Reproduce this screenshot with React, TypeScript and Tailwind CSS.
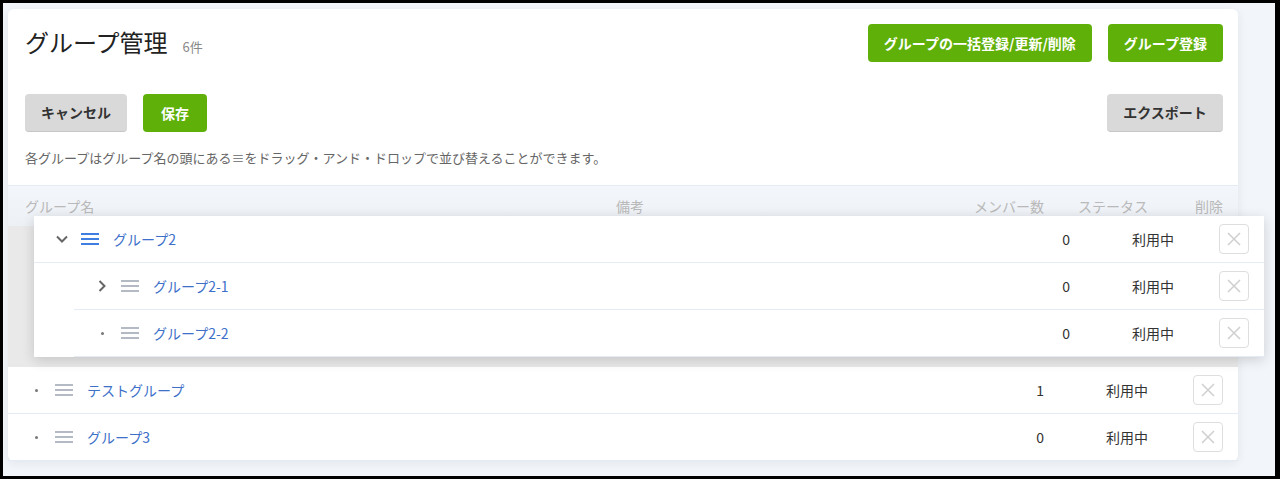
import React from "react";

type Row = {
  name: string;
  count: number;
  status: string;
  lead: "open" | "closed" | "dot";
  active?: boolean;
};

const Hamburger = ({ active }: { active?: boolean }) => (
  <svg width="18" height="12" viewBox="0 0 18 12" className="shrink-0">
    <rect x="0" y="0" width="18" height="2" fill={active ? "#3f7de0" : "#b4bac3"} />
    <rect x="0" y="5" width="18" height="2" fill={active ? "#3f7de0" : "#b4bac3"} />
    <rect x="0" y="10" width="18" height="2" fill={active ? "#3f7de0" : "#b4bac3"} />
  </svg>
);

const Lead = ({ kind }: { kind: Row["lead"] }) => (
  <div className="w-5 h-5 flex items-center justify-center shrink-0">
    {kind === "open" && (
      <svg width="12" height="8" viewBox="0 0 12 8">
        <path d="M1 1.5 L6 6.5 L11 1.5" fill="none" stroke="#666" strokeWidth="2" />
      </svg>
    )}
    {kind === "closed" && (
      <svg width="8" height="12" viewBox="0 0 8 12">
        <path d="M1.5 1 L6.5 6 L1.5 11" fill="none" stroke="#666" strokeWidth="2" />
      </svg>
    )}
    {kind === "dot" && <div className="size-[3px] rounded-full bg-[#777]" />}
  </div>
);

const DeleteBtn = () => (
  <div className="size-[30px] rounded border border-[#dedede] bg-white flex items-center justify-center">
    <svg width="14" height="14" viewBox="0 0 14 14">
      <path d="M1 1 L13 13 M13 1 L1 13" stroke="#cfcfcf" strokeWidth="1.5" />
    </svg>
  </div>
);

const TableRow = ({ row }: { row: Row }) => (
  <div className="flex items-center h-[47px] pl-[18px] pr-[15px] border-b border-[#e4ebf5]">
    <div className="w-[290px] flex items-center shrink-0">
      <Lead kind={row.lead} />
      <div className="ml-[9px]">
        <Hamburger active={row.active} />
      </div>
      <span className="ml-[14px] text-[#3d70c9]">{row.name}</span>
    </div>
    <div className="flex-1" />
    <div className="w-[100px] text-right text-[#333]">{row.count}</div>
    <div className="w-[104px] text-right text-[#333]">{row.status}</div>
    <div className="w-[75px] flex justify-end">
      <DeleteBtn />
    </div>
  </div>
);

export default function App() {
  const parent: Row = { name: "グループ2", count: 0, status: "利用中", lead: "open", active: true };
  const children: Row[] = [
    { name: "グループ2-1", count: 0, status: "利用中", lead: "closed" },
    { name: "グループ2-2", count: 0, status: "利用中", lead: "dot" },
  ];
  const rest: Row[] = [
    { name: "テストグループ", count: 1, status: "利用中", lead: "dot" },
    { name: "グループ3", count: 0, status: "利用中", lead: "dot" },
  ];

  return (
    <div
      className="h-[479px] overflow-hidden bg-[#f2f5f9] border-black border-t-[3px] border-l-[3px] border-r-[5px] border-b-[3px] pt-[6px] pl-[5px]"
      style={{ fontFamily: '"Noto Sans CJK JP", "Noto Sans", sans-serif' }}
    >
      <div className="w-[1230px] bg-white rounded-md shadow-[0_2px_10px_rgba(40,60,90,0.08)] text-[14px]">
        <div className="pl-[17px] pr-[15px] pt-[15px]">
          <div className="flex items-center justify-between h-[38px]">
            <div className="flex items-baseline">
              <h1 className="text-[24px] text-[#222] leading-none">グループ管理</h1>
              <span className="ml-[15px] text-[13px] text-[#888]">6件</span>
            </div>
            <div className="flex gap-4">
              <button className="h-[38px] px-4 rounded bg-[#60b00a] text-white font-bold text-[14px]">
                グループの一括登録/更新/削除
              </button>
              <button className="h-[38px] px-4 rounded bg-[#60b00a] text-white font-bold text-[14px]">
                グループ登録
              </button>
            </div>
          </div>
          <div className="flex items-center justify-between mt-[32px]">
            <div className="flex gap-4">
              <button className="h-[38px] w-[102px] rounded bg-[#d9d9d9] border-b border-[#c6c6c6] text-[#333] font-bold text-[14px]">
                キャンセル
              </button>
              <button className="h-[38px] w-[64px] rounded bg-[#60b00a] text-white font-bold text-[14px]">
                保存
              </button>
            </div>
            <button className="h-[38px] w-[116px] rounded bg-[#d9d9d9] border-b border-[#c6c6c6] text-[#333] font-bold text-[14px]">
              エクスポート
            </button>
          </div>
          <p className="mt-[17px] text-[13px] leading-[18px] text-[#666]">
            各グループはグループ名の頭にある≡をドラッグ・アンド・ドロップで並び替えることができます。
          </p>
        </div>

        <div className="mt-[18px] border-t border-[#e6ecf3] bg-gradient-to-b from-[#f3f6fa] to-[#edf1f6] h-[41px] flex items-center pl-[17px] pr-[15px] text-[#b9b9b9]">
          <div className="w-[291px]">グループ名</div>
          <div className="flex-1 text-center">備考</div>
          <div className="w-[100px] text-right">メンバー数</div>
          <div className="w-[104px] text-right">ステータス</div>
          <div className="w-[75px] text-right">削除</div>
        </div>

        <div className="relative">
          <div className="h-[141px] bg-[#e9e9e9]" />
          <div className="absolute top-[-10px] left-[26px] w-[1230px] bg-white shadow-[0_3px_12px_rgba(0,0,0,0.16)] z-10">
            <TableRow row={parent} />
            <div className="ml-10">
              {children.map((c) => (
                <TableRow key={c.name} row={c} />
              ))}
            </div>
          </div>
          {rest.map((r) => (
            <TableRow key={r.name} row={r} />
          ))}
        </div>
      </div>
    </div>
  );
}
